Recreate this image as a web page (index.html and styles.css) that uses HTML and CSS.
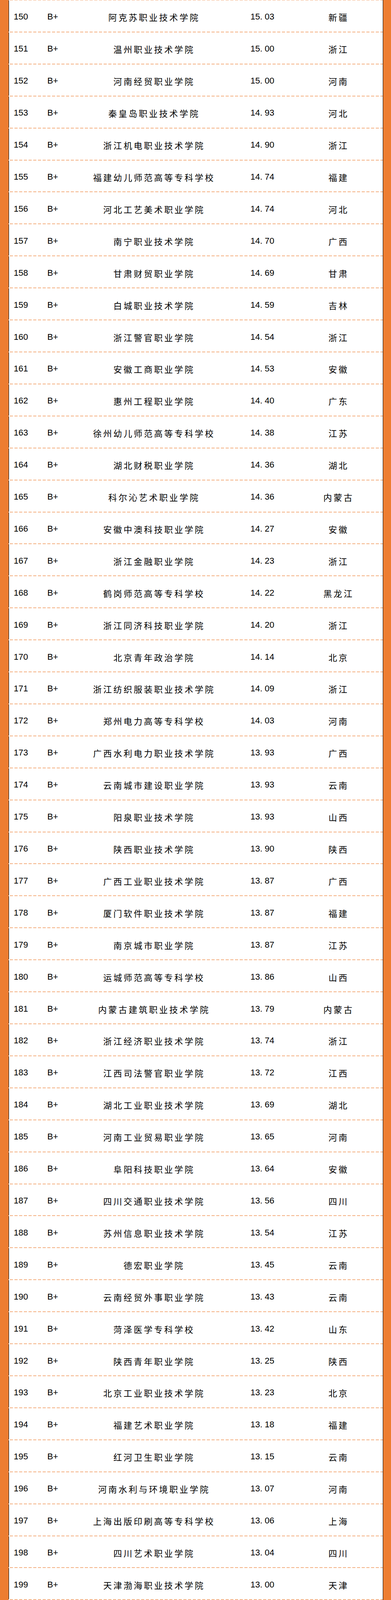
FILE: index.html
```html
<!DOCTYPE html>
<html lang="zh-CN">
<head>
<meta charset="utf-8">
<title>排名</title>
<link rel="stylesheet" href="styles.css">
</head>
<body>
<div class="sheet">
  <div class="row"><span class="rank">150</span><span class="grade">B+</span><span class="name">阿克苏职业技术学院</span><span class="score">15<span class="pt">.</span>03</span><span class="prov">新疆</span></div>
  <div class="row"><span class="rank">151</span><span class="grade">B+</span><span class="name">温州职业技术学院</span><span class="score">15<span class="pt">.</span>00</span><span class="prov">浙江</span></div>
  <div class="row"><span class="rank">152</span><span class="grade">B+</span><span class="name">河南经贸职业学院</span><span class="score">15<span class="pt">.</span>00</span><span class="prov">河南</span></div>
  <div class="row"><span class="rank">153</span><span class="grade">B+</span><span class="name">秦皇岛职业技术学院</span><span class="score">14<span class="pt">.</span>93</span><span class="prov">河北</span></div>
  <div class="row"><span class="rank">154</span><span class="grade">B+</span><span class="name">浙江机电职业技术学院</span><span class="score">14<span class="pt">.</span>90</span><span class="prov">浙江</span></div>
  <div class="row"><span class="rank">155</span><span class="grade">B+</span><span class="name">福建幼儿师范高等专科学校</span><span class="score">14<span class="pt">.</span>74</span><span class="prov">福建</span></div>
  <div class="row"><span class="rank">156</span><span class="grade">B+</span><span class="name">河北工艺美术职业学院</span><span class="score">14<span class="pt">.</span>74</span><span class="prov">河北</span></div>
  <div class="row"><span class="rank">157</span><span class="grade">B+</span><span class="name">南宁职业技术学院</span><span class="score">14<span class="pt">.</span>70</span><span class="prov">广西</span></div>
  <div class="row"><span class="rank">158</span><span class="grade">B+</span><span class="name">甘肃财贸职业学院</span><span class="score">14<span class="pt">.</span>69</span><span class="prov">甘肃</span></div>
  <div class="row"><span class="rank">159</span><span class="grade">B+</span><span class="name">白城职业技术学院</span><span class="score">14<span class="pt">.</span>59</span><span class="prov">吉林</span></div>
  <div class="row"><span class="rank">160</span><span class="grade">B+</span><span class="name">浙江警官职业学院</span><span class="score">14<span class="pt">.</span>54</span><span class="prov">浙江</span></div>
  <div class="row"><span class="rank">161</span><span class="grade">B+</span><span class="name">安徽工商职业学院</span><span class="score">14<span class="pt">.</span>53</span><span class="prov">安徽</span></div>
  <div class="row"><span class="rank">162</span><span class="grade">B+</span><span class="name">惠州工程职业学院</span><span class="score">14<span class="pt">.</span>40</span><span class="prov">广东</span></div>
  <div class="row"><span class="rank">163</span><span class="grade">B+</span><span class="name">徐州幼儿师范高等专科学校</span><span class="score">14<span class="pt">.</span>38</span><span class="prov">江苏</span></div>
  <div class="row"><span class="rank">164</span><span class="grade">B+</span><span class="name">湖北财税职业学院</span><span class="score">14<span class="pt">.</span>36</span><span class="prov">湖北</span></div>
  <div class="row"><span class="rank">165</span><span class="grade">B+</span><span class="name">科尔沁艺术职业学院</span><span class="score">14<span class="pt">.</span>36</span><span class="prov">内蒙古</span></div>
  <div class="row"><span class="rank">166</span><span class="grade">B+</span><span class="name">安徽中澳科技职业学院</span><span class="score">14<span class="pt">.</span>27</span><span class="prov">安徽</span></div>
  <div class="row"><span class="rank">167</span><span class="grade">B+</span><span class="name">浙江金融职业学院</span><span class="score">14<span class="pt">.</span>23</span><span class="prov">浙江</span></div>
  <div class="row"><span class="rank">168</span><span class="grade">B+</span><span class="name">鹤岗师范高等专科学校</span><span class="score">14<span class="pt">.</span>22</span><span class="prov">黑龙江</span></div>
  <div class="row"><span class="rank">169</span><span class="grade">B+</span><span class="name">浙江同济科技职业学院</span><span class="score">14<span class="pt">.</span>20</span><span class="prov">浙江</span></div>
  <div class="row"><span class="rank">170</span><span class="grade">B+</span><span class="name">北京青年政治学院</span><span class="score">14<span class="pt">.</span>14</span><span class="prov">北京</span></div>
  <div class="row"><span class="rank">171</span><span class="grade">B+</span><span class="name">浙江纺织服装职业技术学院</span><span class="score">14<span class="pt">.</span>09</span><span class="prov">浙江</span></div>
  <div class="row"><span class="rank">172</span><span class="grade">B+</span><span class="name">郑州电力高等专科学校</span><span class="score">14<span class="pt">.</span>03</span><span class="prov">河南</span></div>
  <div class="row"><span class="rank">173</span><span class="grade">B+</span><span class="name">广西水利电力职业技术学院</span><span class="score">13<span class="pt">.</span>93</span><span class="prov">广西</span></div>
  <div class="row"><span class="rank">174</span><span class="grade">B+</span><span class="name">云南城市建设职业学院</span><span class="score">13<span class="pt">.</span>93</span><span class="prov">云南</span></div>
  <div class="row"><span class="rank">175</span><span class="grade">B+</span><span class="name">阳泉职业技术学院</span><span class="score">13<span class="pt">.</span>93</span><span class="prov">山西</span></div>
  <div class="row"><span class="rank">176</span><span class="grade">B+</span><span class="name">陕西职业技术学院</span><span class="score">13<span class="pt">.</span>90</span><span class="prov">陕西</span></div>
  <div class="row"><span class="rank">177</span><span class="grade">B+</span><span class="name">广西工业职业技术学院</span><span class="score">13<span class="pt">.</span>87</span><span class="prov">广西</span></div>
  <div class="row"><span class="rank">178</span><span class="grade">B+</span><span class="name">厦门软件职业技术学院</span><span class="score">13<span class="pt">.</span>87</span><span class="prov">福建</span></div>
  <div class="row"><span class="rank">179</span><span class="grade">B+</span><span class="name">南京城市职业学院</span><span class="score">13<span class="pt">.</span>87</span><span class="prov">江苏</span></div>
  <div class="row"><span class="rank">180</span><span class="grade">B+</span><span class="name">运城师范高等专科学校</span><span class="score">13<span class="pt">.</span>86</span><span class="prov">山西</span></div>
  <div class="row"><span class="rank">181</span><span class="grade">B+</span><span class="name">内蒙古建筑职业技术学院</span><span class="score">13<span class="pt">.</span>79</span><span class="prov">内蒙古</span></div>
  <div class="row"><span class="rank">182</span><span class="grade">B+</span><span class="name">浙江经济职业技术学院</span><span class="score">13<span class="pt">.</span>74</span><span class="prov">浙江</span></div>
  <div class="row"><span class="rank">183</span><span class="grade">B+</span><span class="name">江西司法警官职业学院</span><span class="score">13<span class="pt">.</span>72</span><span class="prov">江西</span></div>
  <div class="row"><span class="rank">184</span><span class="grade">B+</span><span class="name">湖北工业职业技术学院</span><span class="score">13<span class="pt">.</span>69</span><span class="prov">湖北</span></div>
  <div class="row"><span class="rank">185</span><span class="grade">B+</span><span class="name">河南工业贸易职业学院</span><span class="score">13<span class="pt">.</span>65</span><span class="prov">河南</span></div>
  <div class="row"><span class="rank">186</span><span class="grade">B+</span><span class="name">阜阳科技职业学院</span><span class="score">13<span class="pt">.</span>64</span><span class="prov">安徽</span></div>
  <div class="row"><span class="rank">187</span><span class="grade">B+</span><span class="name">四川交通职业技术学院</span><span class="score">13<span class="pt">.</span>56</span><span class="prov">四川</span></div>
  <div class="row"><span class="rank">188</span><span class="grade">B+</span><span class="name">苏州信息职业技术学院</span><span class="score">13<span class="pt">.</span>54</span><span class="prov">江苏</span></div>
  <div class="row"><span class="rank">189</span><span class="grade">B+</span><span class="name">德宏职业学院</span><span class="score">13<span class="pt">.</span>45</span><span class="prov">云南</span></div>
  <div class="row"><span class="rank">190</span><span class="grade">B+</span><span class="name">云南经贸外事职业学院</span><span class="score">13<span class="pt">.</span>43</span><span class="prov">云南</span></div>
  <div class="row"><span class="rank">191</span><span class="grade">B+</span><span class="name">菏泽医学专科学校</span><span class="score">13<span class="pt">.</span>42</span><span class="prov">山东</span></div>
  <div class="row"><span class="rank">192</span><span class="grade">B+</span><span class="name">陕西青年职业学院</span><span class="score">13<span class="pt">.</span>25</span><span class="prov">陕西</span></div>
  <div class="row"><span class="rank">193</span><span class="grade">B+</span><span class="name">北京工业职业技术学院</span><span class="score">13<span class="pt">.</span>23</span><span class="prov">北京</span></div>
  <div class="row"><span class="rank">194</span><span class="grade">B+</span><span class="name">福建艺术职业学院</span><span class="score">13<span class="pt">.</span>18</span><span class="prov">福建</span></div>
  <div class="row"><span class="rank">195</span><span class="grade">B+</span><span class="name">红河卫生职业学院</span><span class="score">13<span class="pt">.</span>15</span><span class="prov">云南</span></div>
  <div class="row"><span class="rank">196</span><span class="grade">B+</span><span class="name">河南水利与环境职业学院</span><span class="score">13<span class="pt">.</span>07</span><span class="prov">河南</span></div>
  <div class="row"><span class="rank">197</span><span class="grade">B+</span><span class="name">上海出版印刷高等专科学校</span><span class="score">13<span class="pt">.</span>06</span><span class="prov">上海</span></div>
  <div class="row"><span class="rank">198</span><span class="grade">B+</span><span class="name">四川艺术职业学院</span><span class="score">13<span class="pt">.</span>04</span><span class="prov">四川</span></div>
  <div class="row"><span class="rank">199</span><span class="grade">B+</span><span class="name">天津渤海职业技术学院</span><span class="score">13<span class="pt">.</span>00</span><span class="prov">天津</span></div>
</div>
</body>
</html>
```

FILE: styles.css
```css
html, body {
  margin: 0;
  padding: 0;
}

body {
  background: #ed7d31;
  font-family: "Liberation Sans", "Noto Sans CJK SC", sans-serif;
  color: #000;
}

/* the sheet fills the visible window; its 50 rows share the height */
.sheet {
  box-sizing: border-box;
  height: 100vh;
  display: flex;
  flex-direction: column;
  margin: 0 20px 0 22px;
  background-color: #fff;
  padding-top: 1px;
  background-image:
    linear-gradient(#000, #000),
    repeating-linear-gradient(90deg, #f4b183 0 8px, transparent 8px 12px);
  background-size: 1px 100%, calc(100% - 4px) 1px;
  background-position: 100% 0, 3px 0;
  background-repeat: no-repeat;
}

.row {
  box-sizing: border-box;
  flex: 1 1 0;
  min-height: 0;
  overflow: hidden;
  padding: 5px 1px 2px;
  display: grid;
  grid-template-columns: 90px 100px 358px 200px 186px;
  align-items: center;
  font-size: 22px;
  line-height: 30px;
  background-image:
    linear-gradient(#000, #000),
    linear-gradient(#000, #000),
    repeating-linear-gradient(90deg, #f4b183 0 8px, transparent 8px 12px);
  background-size: 1px calc(100% - 2px), 1px 100%, calc(100% - 4px) 2px;
  background-position: 0 0, 100% 0, 3px 100%;
  background-repeat: no-repeat;
}

.rank {
  padding-left: 12px;
}

.grade {
  padding-left: 8px;
}

.name,
.prov {
  text-align: center;
  letter-spacing: 4px;
  padding-left: 4px;
  font-family: "Noto Sans CJK SC", sans-serif;
}

.score {
  text-align: center;
}

.pt {
  margin-right: 6px;
}
```
